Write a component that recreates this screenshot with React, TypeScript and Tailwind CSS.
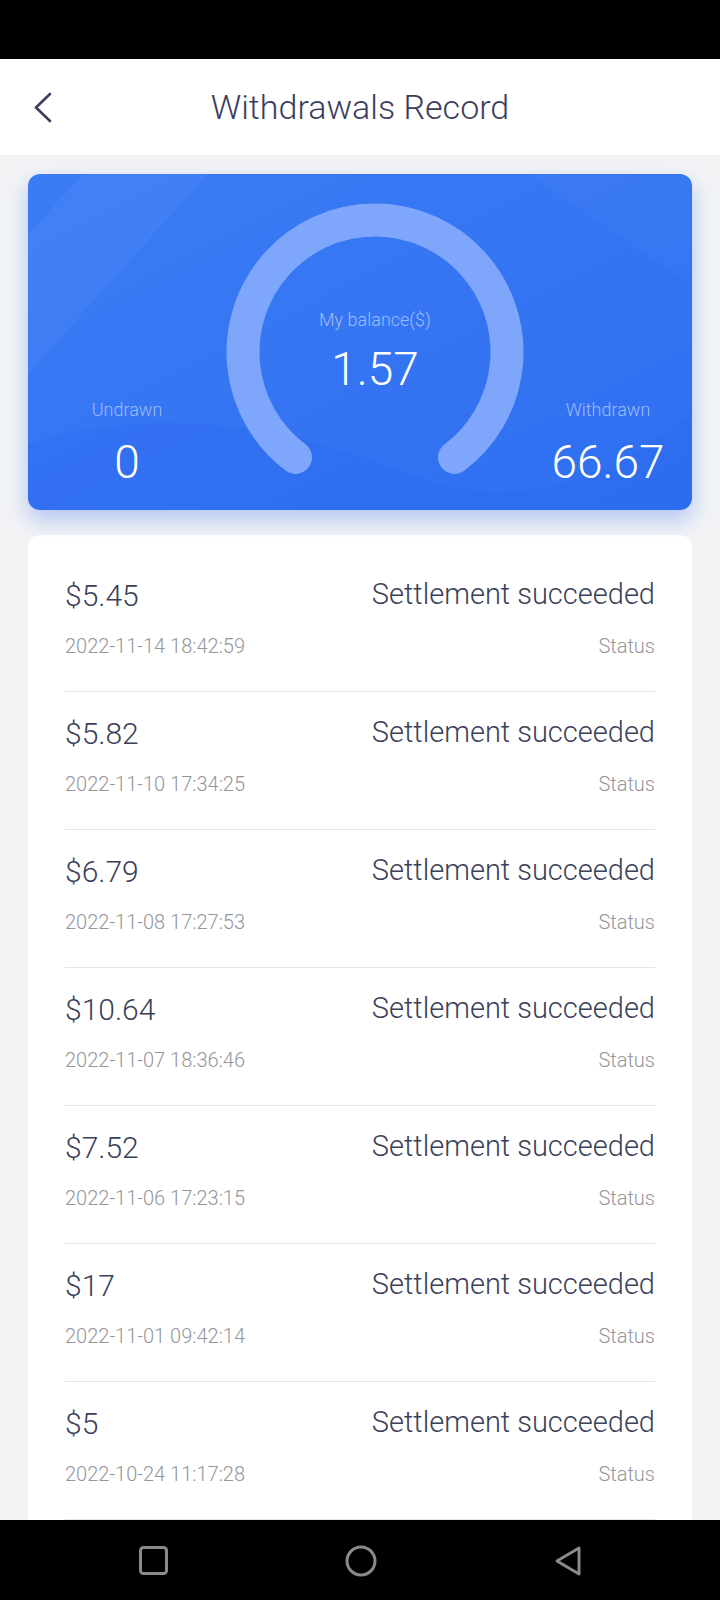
import React from "react";

const rows = [
  { amount: "$5.45", date: "2022-11-14 18:42:59" },
  { amount: "$5.82", date: "2022-11-10 17:34:25" },
  { amount: "$6.79", date: "2022-11-08 17:27:53" },
  { amount: "$10.64", date: "2022-11-07 18:36:46" },
  { amount: "$7.52", date: "2022-11-06 17:23:15" },
  { amount: "$17", date: "2022-11-01 09:42:14" },
  { amount: "$5", date: "2022-10-24 11:17:28" },
];

function Gauge() {
  return (
    <div className="relative mt-[29px] h-[272px] w-[298px] shrink-0">
      <svg width="298" height="272" viewBox="0 0 298 272" className="absolute inset-0">
        <path
          d="M 69.5 254.4 A 132 132 0 1 1 228.5 254.4"
          fill="none"
          stroke="#7ea6fb"
          strokeWidth="33"
          strokeLinecap="round"
        />
      </svg>
      <div className="relative flex flex-col items-center pt-[105px]">
        <div className="text-[18px] leading-[24px] font-light text-[#9dbcfc]">My balance($)</div>
        <div className="mt-[11px] text-[46px] leading-[52px] font-light text-white">1.57</div>
      </div>
    </div>
  );
}

function BalanceCard() {
  return (
    <div className="relative mx-[28px] mt-[19px] h-[336px] overflow-hidden rounded-[12px] bg-gradient-to-br from-[#3b7cf5] to-[#2f6ef0] shadow-[0_10px_22px_rgba(54,118,240,0.35)]">
      <svg className="absolute inset-0" width="662" height="336" viewBox="0 0 662 336">
        <path d="M0 60 L55 0 L180 0 L0 200 Z" fill="#ffffff" opacity="0.04" />
        <path d="M340 0 L500 0 L662 110 L662 0 Z" fill="#ffffff" opacity="0.025" />
        <path d="M0 270 C120 230 260 250 380 300 C480 340 580 310 662 240 L662 336 L0 336 Z" fill="#2a66ee" opacity="0.3" />
      </svg>
      <div className="relative flex h-full">
        <div className="flex w-[198px] shrink-0 flex-col items-center justify-end pb-[22px]">
          <div className="text-[18px] leading-[24px] font-light text-[#9dbcfc]">Undrawn</div>
          <div className="mt-[14px] text-[46px] leading-[52px] font-light text-white">0</div>
        </div>
        <Gauge />
        <div className="flex flex-1 flex-col items-center justify-end pb-[22px]">
          <div className="text-[18px] leading-[24px] font-light text-[#9dbcfc]">Withdrawn</div>
          <div className="mt-[14px] text-[46px] leading-[52px] font-light text-white">66.67</div>
        </div>
      </div>
    </div>
  );
}

function Row({ amount, date }: { amount: string; date: string }) {
  return (
    <div className="h-[138px] border-b border-[#e6e6ea] pt-[23px]">
      <div className="flex h-[36px] items-center justify-between text-[30px] font-light text-[#3b3f58]">
        <span>{amount}</span>
        <span className="text-[29px]">Settlement succeeded</span>
      </div>
      <div className="mt-[21px] flex h-[24px] items-center justify-between text-[20px] font-light text-[#95959a]">
        <span>{date}</span>
        <span>Status</span>
      </div>
    </div>
  );
}

export default function App() {
  return (
    <div
      className="relative flex h-[1600px] w-[720px] flex-col overflow-hidden bg-[#f2f3f5]"
      style={{ fontFamily: "Roboto, 'Open Sans', sans-serif" }}
    >
      <div className="h-[59px] shrink-0 bg-black" />
      <header className="relative flex h-[96px] shrink-0 items-center justify-center bg-white">
        <svg className="absolute left-[33px] top-[33px]" width="20" height="31" viewBox="0 0 20 31">
          <path d="M17 2 L3 15.5 L17 29" fill="none" stroke="#3a3d5c" strokeWidth="2.6" strokeLinecap="round" strokeLinejoin="round" />
        </svg>
        <h1 className="text-[34px] font-light text-[#3a3d5c]">Withdrawals Record</h1>
      </header>
      <BalanceCard />
      <div className="mx-[28px] mt-[25px] flex-1 rounded-t-[12px] bg-white px-[37px] pt-[19px]">
        {rows.map((r) => (
          <Row key={r.date} amount={r.amount} date={r.date} />
        ))}
      </div>
      <nav className="absolute bottom-0 left-0 flex h-[80px] w-full items-center bg-black">
        <svg className="absolute left-[139px] top-[26px]" width="29" height="29" viewBox="0 0 29 29">
          <rect x="1.5" y="1.5" width="26" height="26" rx="3" fill="none" stroke="#8a8a8a" strokeWidth="3" />
        </svg>
        <svg className="absolute left-[345px] top-[25px]" width="32" height="32" viewBox="0 0 32 32">
          <circle cx="16" cy="16" r="14" fill="none" stroke="#8a8a8a" strokeWidth="3" />
        </svg>
        <svg className="absolute left-[553px] top-[25px]" width="30" height="32" viewBox="0 0 30 32">
          <path d="M26 3 L4 16 L26 29 Z" fill="none" stroke="#8a8a8a" strokeWidth="3" strokeLinejoin="round" />
        </svg>
      </nav>
    </div>
  );
}
